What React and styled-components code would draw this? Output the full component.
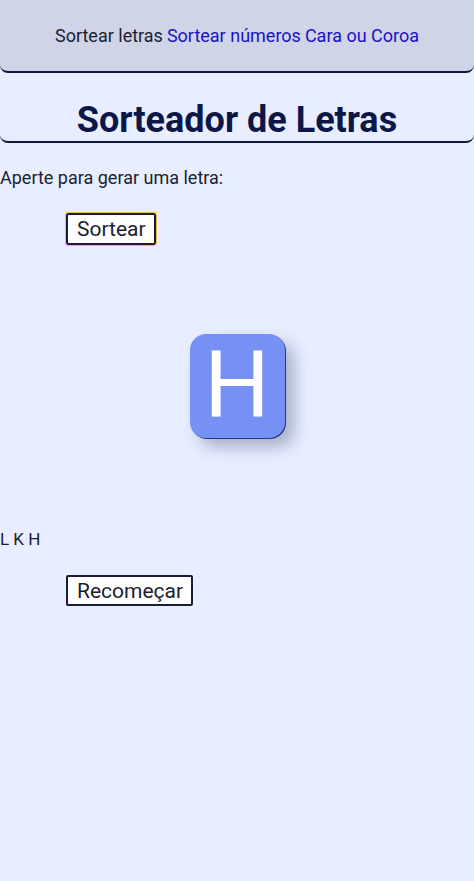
import React, { useState } from "react";
import styled, { createGlobalStyle } from "styled-components";

const GlobalStyle = createGlobalStyle`
  html, body {
    margin: 0;
    padding: 0;
    background: #e8eeff;
    font-family: Roboto, "Liberation Sans", sans-serif;
    color: #1b1d33;
  }
`;

const Page = styled.div`
  min-height: 881px;
  background: #e8eeff;
`;

const Header = styled.header`
  height: 71px;
  background: #cfd4e6;
  border-bottom: 2px solid #14183a;
  border-radius: 0 0 8px 8px;
  display: flex;
  align-items: center;
  justify-content: center;
  font-size: 18px;
`;

const NavItem = styled.span`
  color: ${(p) => (p.$link ? "#1a12c9" : "#1b1d33")};
  margin: 0 2px;
`;

const Title = styled.h1`
  margin: 0;
  padding: 26px 0 0;
  text-align: center;
  font-size: 36px;
  line-height: 42px;
  font-weight: 700;
  color: #0c1747;
  border-bottom: 2px solid #14183a;
  border-radius: 0 0 8px 8px;
`;

const Text = styled.p`
  margin: 24px 0 0;
  font-size: 18px;
  line-height: 22px;
`;

const Button = styled.button`
  display: block;
  margin: ${(p) => p.$top}px 0 0 66px;
  padding: 0 8px 0 9px;
  height: ${(p) => p.$h}px;
  font-family: Roboto, "Liberation Sans", sans-serif;
  font-size: 21px;
  color: #1b1d33;
  background: #fff;
  border: 2px solid #1b1d33;
  border-radius: 2px;
  outline: ${(p) => (p.$focus ? "1.5px solid #f0b650" : "none")};
  outline-offset: 0;
  cursor: pointer;
`;

const CardRow = styled.div`
  display: flex;
  justify-content: center;
  padding: 89px 0 0 0;
`;

const Card = styled.div`
  width: 95px;
  height: 104px;
  border-radius: 16px;
  background: #7690f4;
  box-shadow: 1px 1px 0 #2b3880, 9px 9px 16px rgba(70, 80, 120, 0.4);
  display: flex;
  align-items: center;
  justify-content: center;
  color: #fff;
  font-size: 92px;
  font-weight: 400;
  line-height: 1;
`;

const History = styled.p`
  margin: 90px 0 0;
  font-size: 17px;
  line-height: 22px;
`;

export default function App() {
  const [history, setHistory] = useState(["L", "K", "H"]);
  const current = history[history.length - 1] || "";

  const draw = () => {
    const letter = String.fromCharCode(65 + Math.floor(Math.random() * 26));
    setHistory([...history, letter]);
  };

  return (
    <Page>
      <GlobalStyle />
      <Header>
        <NavItem>Sortear letras</NavItem>
        <NavItem $link>Sortear números</NavItem>
        <NavItem $link>Cara ou Coroa</NavItem>
      </Header>
      <Title>Sorteador de Letras</Title>
      <Text>Aperte para gerar uma letra:</Text>
      <Button $top={24} $h={32} $focus onClick={draw}>
        Sortear
      </Button>
      <CardRow>
        <Card>{current}</Card>
      </CardRow>
      <History>{history.join(" ")}</History>
      <Button $top={25} $h={31} onClick={() => setHistory([])}>
        Recomeçar
      </Button>
    </Page>
  );
}
